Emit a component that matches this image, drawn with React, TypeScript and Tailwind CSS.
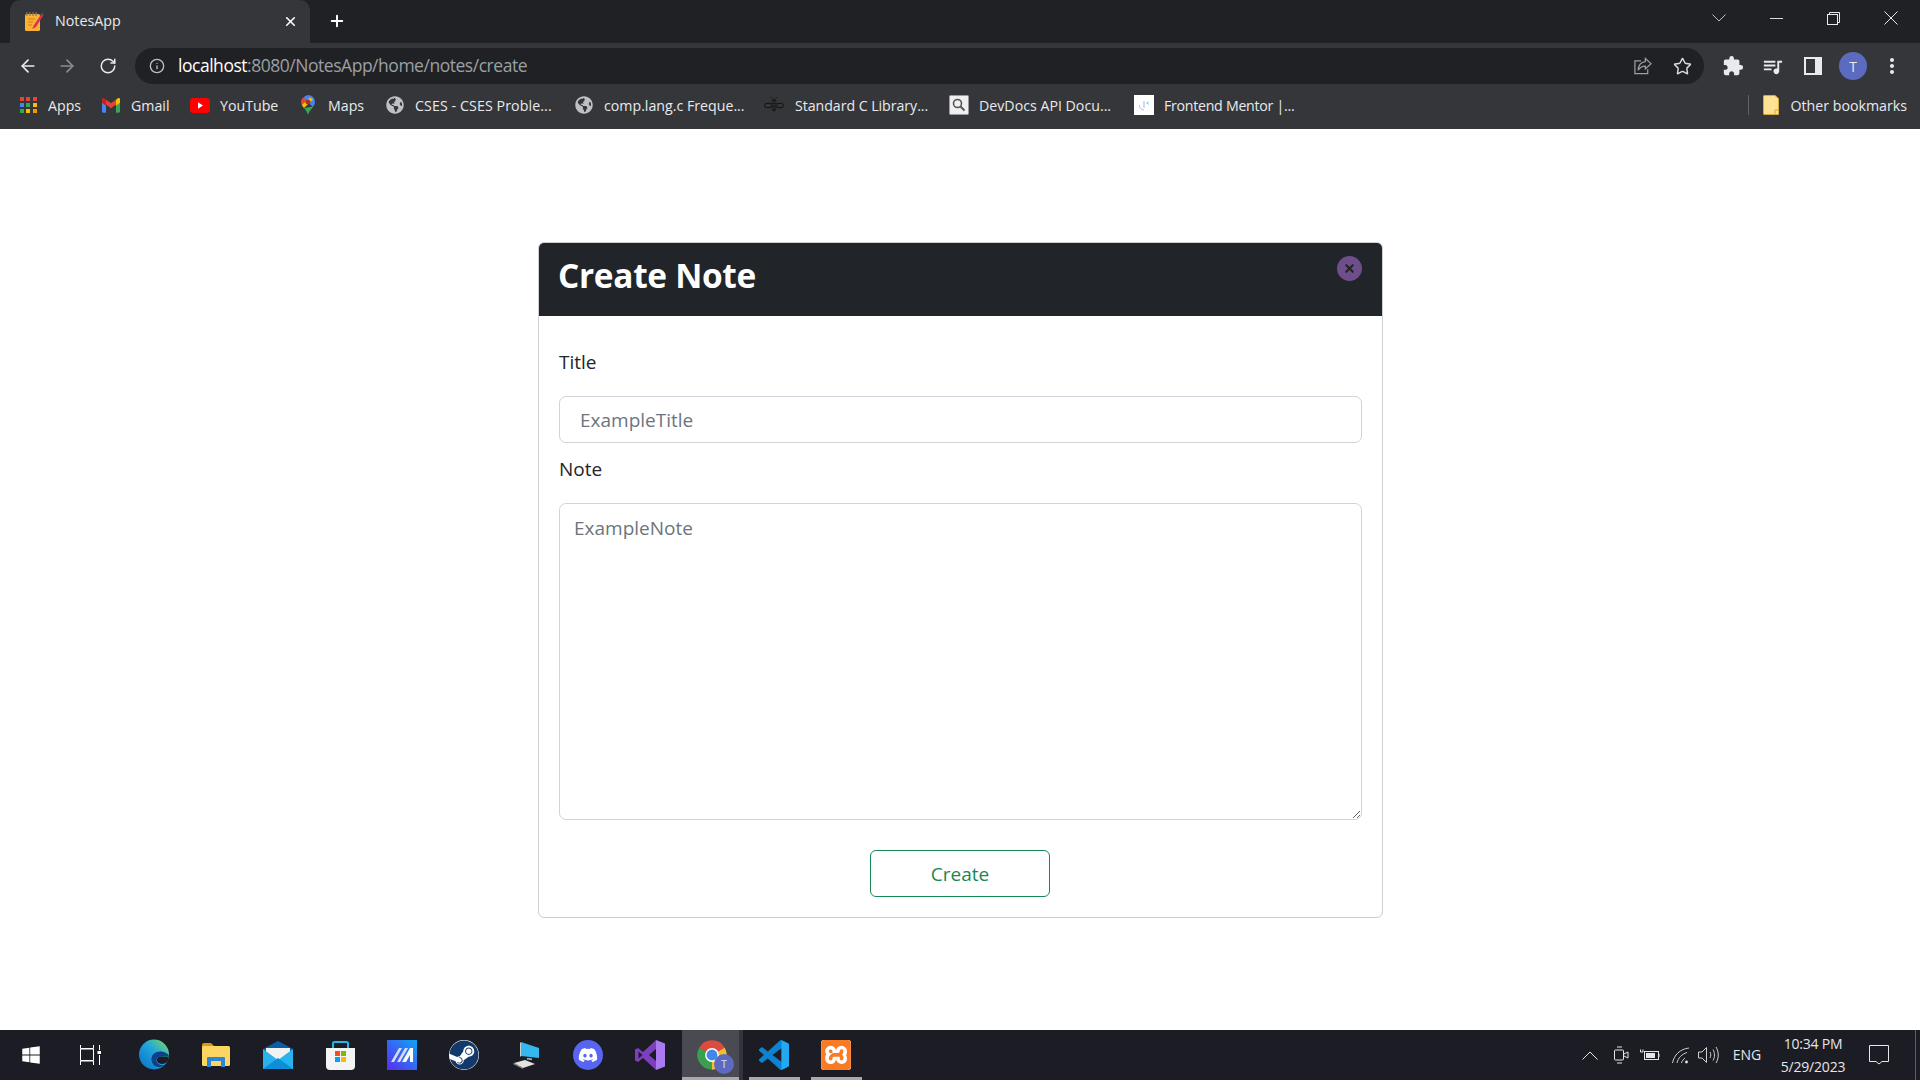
import { ArrowLeft, ArrowRight, RotateCw, Plus, X, Info, Star } from "lucide-react";
import { FaDiscord, FaGlobeAmericas, FaSteam, FaWindows } from "react-icons/fa";
import { MdExtension, MdMoreVert, MdQueueMusic } from "react-icons/md";
import { SiXampp } from "react-icons/si";
import { ReactNode } from "react";

function Favicon() {
    return <svg viewBox="0 0 20 20" className="w-5 h-5">
        <rect x="1" y="3" width="15" height="17" rx="1.5" fill="#f9b233" />
        <path d="M3 1v4M6 1v4M9 1v4M12 1v4" stroke="#777" strokeWidth="1.2" />
        <path d="M4 8h7M4 11h5M4 14h4" stroke="#e98a1d" strokeWidth="1.3" />
        <path d="M18 2 L10 14 L8 18 L12 16 L19.5 4 Z" fill="#e0304e" />
        <path d="M18 2 L19.5 4 L18.6 5.4 L16.8 3.8 Z" fill="#555" />
    </svg>
}

function AppsIcon() {
    const colors = ["#ea4335", "#ea4335", "#ea4335", "#4285f4", "#34a853", "#fbbc04", "#34a853", "#fbbc04", "#f29900"]
    return <div className="grid grid-cols-3 gap-[2px] w-[17px]">
        {colors.map((c, i) => <div key={i} className="h-[4px] w-[4px]" style={{ background: c }} />)}
    </div>
}

function GmailIcon() {
    return <svg viewBox="0 0 20 16" className="w-[18px] h-[15px]">
        <path d="M0 3 V14.5 A1.5 1.5 0 0 0 1.5 16 H4.5 V7 Z" fill="#4285f4" />
        <path d="M15.5 7 V16 H18.5 A1.5 1.5 0 0 0 20 14.5 V3 Z" fill="#34a853" />
        <path d="M4.5 7 L10 11 L15.5 7 V1.5 L10 5.6 L4.5 1.5 Z" fill="#ea4335" />
        <path d="M0 3 V5 L4.5 8.4 V1.5 L3 .4 A1.9 1.9 0 0 0 0 3 Z" fill="#c5221f" />
        <path d="M15.5 1.5 V8.4 L20 5 V3 A1.9 1.9 0 0 0 17 .4 Z" fill="#fbbc04" />
    </svg>
}

function YoutubeIcon() {
    return <svg viewBox="0 0 20 15" className="w-5 h-[15px]">
        <rect width="20" height="15" rx="3.5" fill="#f00" />
        <path d="M8 4.3 L13 7.5 L8 10.7 Z" fill="#fff" />
    </svg>
}

function MapsIcon() {
    return <svg viewBox="0 0 14 20" className="w-[14px] h-5">
        <path d="M7 0 A7 7 0 0 1 14 7 C14 9 13 10.5 12 12 L2 3 A7 7 0 0 1 7 0 Z" fill="#4285f4" />
        <path d="M2 2.4 A7 7 0 0 0 0 7 C0 8 .3 9 .8 9.8 L6 5 Z" fill="#ea4335" />
        <path d="M.8 9.8 L9 2.6 L12.2 4.6 L3 13 C2 12 1.3 11 .8 9.8 Z" fill="#fbbc04" />
        <path d="M3 13 L12.4 11.4 C10.5 14 8 16 7 20 C6.5 17.5 4.7 15 3 13 Z" fill="#34a853" />
        <circle cx="7" cy="7" r="2.5" fill="#a5352c" />
    </svg>
}

function Globe() {
    return <FaGlobeAmericas className="w-[18px] h-[18px] text-[#bdc1c6]" />
}

function BeeIcon() {
    return <svg viewBox="0 0 20 16" className="w-5 h-4" fill="#1b1b1b">
        <ellipse cx="10" cy="8" rx="3" ry="6.5" />
        <path d="M8 1 L6.5 0M12 1 L13.5 0" stroke="#1b1b1b" />
        <ellipse cx="4" cy="8.5" rx="3.6" ry="2.3" fill="none" stroke="#111" strokeWidth="1" />
        <ellipse cx="16" cy="8.5" rx="3.6" ry="2.3" fill="none" stroke="#111" strokeWidth="1" />
        <path d="M7 5h6M7 8h6M7 11h6" stroke="#35363a" strokeWidth="1" />
    </svg>
}

function DevDocsIcon() {
    return <svg viewBox="0 0 20 20" className="w-5 h-5">
        <rect x=".5" y=".5" width="19" height="19" rx="1" fill="#efefef" stroke="#9a9a9a" />
        <circle cx="8.5" cy="8.5" r="4" fill="none" stroke="#555" strokeWidth="1.6" />
        <path d="M11.5 11.5 L15.5 15.5" stroke="#555" strokeWidth="2" />
    </svg>
}

function FrontendMentorIcon() {
    return <svg viewBox="0 0 20 20" className="w-5 h-5">
        <rect width="20" height="20" fill="#fff" />
        <path d="M10 6 V13" stroke="#9db2e8" strokeWidth="1" />
        <path d="M5.5 10 A5 5 0 0 0 10 15" stroke="#b9b7e8" strokeWidth="1" fill="none" />
        <path d="M12.5 8 L15 7 M12.5 8 L15 9.5" stroke="#8fd0dc" strokeWidth="1" />
    </svg>
}

function FolderIcon() {
    return <svg viewBox="0 0 16 20" className="w-4 h-5">
        <path d="M.5 1 A.7 .7 0 0 1 1.2 .5 H12 L15.5 3.5 V19.5 H1.2 A.7 .7 0 0 1 .5 18.8 Z" fill="#fde293" stroke="#d6a93c" />
        <path d="M12 19 V15 H15.5" fill="none" stroke="#d6a93c" />
    </svg>
}

function ShareIcon() {
    return <svg viewBox="0 0 20 20" className="w-[19px] h-[19px]" fill="none" stroke="#9aa0a6" strokeWidth="1.3">
        <path d="M8.5 4 H2 V17.5 H15.5 V13" />
        <path d="M13 1.5 L19 7 L13 12.5 V9.5 C9.5 9.5 7 11 5.5 14 C5.5 9 8 5.5 13 4.8 Z" />
    </svg>
}

function SidePanelIcon() {
    return <svg viewBox="0 0 18 18" className="w-[18px] h-[18px]">
        <rect x="0" y="0" width="18" height="18" fill="#e8eaed" />
        <rect x="2" y="2" width="9" height="14" fill="#35363a" />
    </svg>
}

function WindowControls() {
    return <div className="flex items-center h-full ml-auto pb-[7px]">
        <svg viewBox="0 0 14 8" className="w-[14px] h-2" fill="none" stroke="#bdc1c6"><path d="M.5 .5 L7 7 L13.5 .5" /></svg>
        <svg viewBox="0 0 14 1" className="w-[13px] h-[1px] ml-[44px]"><rect width="14" height="1" fill="#e8eaed" /></svg>
        <svg viewBox="0 0 13 13" className="w-[13px] h-[13px] ml-[44px]" fill="none" stroke="#e8eaed"><path d="M2.5 2.5 V.5 H12.5 V10.5 H10.5" /><rect x=".5" y="2.5" width="10" height="10" /></svg>
        <svg viewBox="0 0 14 14" className="w-[14px] h-[14px] ml-[44px] mr-[22px]" fill="none" stroke="#e8eaed"><path d="M.5 .5 L13.5 13.5 M13.5 .5 L.5 13.5" /></svg>
    </div>
}

type Bookmark = { label: string, icon: ReactNode, slot: string, width: string, text?: string }

const bookmarks: Bookmark[] = [
    { label: "Apps", icon: <AppsIcon />, slot: "w-[28px]", width: "w-[82px]" },
    { label: "Gmail", icon: <GmailIcon />, slot: "w-[29px]", width: "w-[88px]" },
    { label: "YouTube", icon: <YoutubeIcon />, slot: "w-[30px]", width: "w-[111px]" },
    { label: "Maps", icon: <MapsIcon />, slot: "w-[27px]", width: "w-[85px]" },
    { label: "CSES - CSES Proble...", icon: <Globe />, slot: "w-[29px]", width: "w-[189px]", text: "tracking-[0.1px]" },
    { label: "comp.lang.c Freque...", icon: <Globe />, slot: "w-[29px]", width: "w-[189px]" },
    { label: "Standard C Library...", icon: <BeeIcon />, slot: "w-[31px]", width: "w-[185px]", text: "tracking-[-0.05px]" },
    { label: "DevDocs API Docu...", icon: <DevDocsIcon />, slot: "w-[30px]", width: "w-[185px]" },
    { label: "Frontend Mentor |...", icon: <FrontendMentorIcon />, slot: "w-[30px]", width: "w-[180px]", text: "tracking-[-0.28px]" },
]

function BrowserChrome() {
    return <header className="shrink-0 font-['Open_Sans',sans-serif] text-[#e8eaed]">
        <div className="h-[43px] bg-[#202124] flex items-end pl-[10px]">
            <div className="w-[300px] h-[43px] bg-[#35363a] rounded-t-[10px] flex items-center pl-[14px] pr-[12px] pb-[1px]">
                <Favicon />
                <span className="ml-[11px] text-[14.3px]">NotesApp</span>
                <X className="ml-auto w-[15px] h-[15px] text-white" strokeWidth={2.6} />
            </div>
            <div className="h-[43px] flex items-center ml-[18px] pb-[1px]">
                <Plus className="w-[18px] h-[18px] text-white" strokeWidth={2.6} />
            </div>
            <WindowControls />
        </div>
        <div className="h-[41px] bg-[#35363a] pt-[5px] flex items-start">
            <div className="w-[135px] h-[36px] flex items-center pl-[18px]">
                <ArrowLeft className="w-5 h-5 text-[#e8eaed]" strokeWidth={2} />
                <ArrowRight className="w-5 h-5 text-[#8a8c90] ml-[19px]" strokeWidth={2} />
                <RotateCw className="w-[18px] h-[18px] text-[#e8eaed] ml-[22px]" strokeWidth={2} />
            </div>
            <div className="w-[1569px] h-[36px] bg-[#202124] rounded-full flex items-center pl-[14px] pr-[12px]">
                <Info className="w-4 h-4 text-[#bdc1c6]" strokeWidth={2} />
                <span className="ml-[13px] pb-[2px] text-[17.5px] tracking-[-0.47px] text-white">localhost<span className="text-[#9aa0a6]">:8080/NotesApp/home/notes/create</span></span>
                <div className="ml-auto flex items-center gap-[21px]">
                    <ShareIcon />
                    <Star className="w-[19px] h-[19px] text-[#dadce0]" strokeWidth={1.8} />
                </div>
            </div>
            <div className="flex-1 h-[36px] flex items-center pl-[18px]">
                <MdExtension className="w-[22px] h-[22px] text-[#e8eaed]" />
                <MdQueueMusic className="w-[23px] h-[23px] text-[#e8eaed] ml-[17px]" />
                <div className="ml-[20px]"><SidePanelIcon /></div>
                <div className="ml-[17px] w-[28px] h-[28px] rounded-full bg-[#5c6bc0] flex items-center justify-center text-[14px] text-[#e8eaed]">T</div>
                <MdMoreVert className="w-[24px] h-[24px] text-[#e8eaed] ml-[13px]" />
            </div>
        </div>
        <div className="h-[45px] bg-[#35363a] flex items-center pl-[20px] pb-[2px] text-[14.2px] whitespace-nowrap">
            {bookmarks.map((b) => <div key={b.label} className={`flex items-center ${b.width}`}>
                <div className={`flex items-center ${b.slot}`}>{b.icon}</div>
                <span className={b.text}>{b.label}</span>
            </div>)}
            <div className="ml-auto flex items-center pr-[13px]">
                <div className="w-[1px] h-[20px] bg-[#5f6368] mr-[14px]" />
                <FolderIcon />
                <span className="ml-[12px]">Other bookmarks</span>
            </div>
        </div>
    </header>
}

function CreateNoteCard() {
    return <main className="flex-1 bg-white pt-[113px] font-['Open_Sans',sans-serif]">
        <div className="w-[845px] h-[676px] ml-[538px] border border-[#cfcfd2] rounded-[6px] overflow-hidden">
            <div className="h-[73px] bg-[#212529] flex pl-[19px] pr-[20px] relative">
                <h1 className="text-[33.4px] font-bold text-white leading-[65px] tracking-[-0.3px]">Create Note</h1>
                <button className="ml-auto mt-[13px] w-[25px] h-[25px] rounded-full bg-[#6f4e8c] flex items-center justify-center">
                    <X className="w-[13px] h-[13px] text-[#212529]" strokeWidth={4} />
                </button>
            </div>
            <form className="px-[20px] flex flex-col">
                <label className="mt-[31px] h-[30px] leading-[30px] text-[19px] text-[#212529]">Title</label>
                <input placeholder="ExampleTitle" className="mt-[19px] h-[47px] border border-[#ced4da] rounded-[7px] pl-[20px] pt-[1px] text-[19px] outline-none placeholder:text-[#6c757d]" />
                <label className="mt-[11px] h-[30px] leading-[30px] text-[19px] text-[#212529]">Note</label>
                <textarea placeholder="ExampleNote" className="mt-[19px] h-[317px] border border-[#ced4da] rounded-[7px] pl-[14px] pr-[15px] py-[9px] text-[19px] leading-[30px] outline-none placeholder:text-[#6c757d]" />
                <button type="button" className="mt-[30px] self-start ml-[311px] w-[180px] h-[47px] border border-[#198754] rounded-[6px] pt-[2px] text-[19px] text-[#198754]">Create</button>
            </form>
        </div>
    </main>
}

function EdgeIcon() {
    return <svg viewBox="0 0 32 32" className="w-[32px] h-[32px]">
        <defs>
            <linearGradient id="edgeA" x1="0" y1="1" x2="1" y2="0">
                <stop offset="0" stopColor="#0c6ec4" />
                <stop offset=".55" stopColor="#1fa5dd" />
                <stop offset="1" stopColor="#7fe05a" />
            </linearGradient>
        </defs>
        <circle cx="16" cy="15.5" r="15" fill="url(#edgeA)" />
        <path d="M31 17 C30 14 26 12.5 22 12.5 C16 12.5 13 17 13.5 21 C14 27 21 31 27 25.5 C23 27 18.5 25 18.5 21.5 C18.5 19 20 17.4 22 17.4 Z" fill="#0d3f8a" />
        <path d="M19 21 C19 18.8 20.5 17.4 22 17.4 L30.8 17.4 C30.8 19 30 21.5 29 23 C26 26 19 25.5 19 21 Z" fill="#1b1c24" />
    </svg>
}

function ExplorerIcon() {
    return <svg viewBox="0 0 28 24" className="w-[28px] h-[24px]">
        <path d="M0 2 A2 2 0 0 1 2 0 H9 L12 3 H12 V6 H0 Z" fill="#d99a0b" />
        <rect x="0" y="3" width="28" height="20" rx="1.5" fill="#fcd562" />
        <path d="M5 24 V15 A1 1 0 0 1 6 14 H22 A1 1 0 0 1 23 15 V24 H19 V18 H9 V24 Z" fill="#2b88d8" />
    </svg>
}

function MailIcon() {
    return <svg viewBox="0 0 30 28" className="w-[30px] h-[28px]">
        <path d="M0 8 L15 0 L30 8 V12 H0 Z" fill="#0a5ea8" />
        <path d="M3 7 H27 V18 H3 Z" fill="#f2f2f2" />
        <path d="M0 8 L15 19 L30 8 V28 H0 Z" fill="#28b3ee" />
        <path d="M0 28 L15 17 L30 28 Z" fill="#0e8ed8" />
    </svg>
}

function StoreIcon() {
    return <svg viewBox="0 0 29 29" className="w-[29px] h-[29px]">
        <path d="M7 7 V2.5 A1.5 1.5 0 0 1 8.5 1 H20.5 A1.5 1.5 0 0 1 22 2.5 V7" fill="none" stroke="#25b6e8" strokeWidth="2" />
        <path d="M0 7 H29 V25 A4 4 0 0 1 25 29 H4 A4 4 0 0 1 0 25 Z" fill="#f4f4f4" />
        <rect x="9" y="10" width="5" height="5" fill="#f25022" />
        <rect x="15" y="10" width="5" height="5" fill="#7fba00" />
        <rect x="9" y="16" width="5" height="5" fill="#00a4ef" />
        <rect x="15" y="16" width="5" height="5" fill="#ffb900" />
    </svg>
}

function MaIcon() {
    return <svg viewBox="0 0 30 30" className="w-[30px] h-[30px]">
        <defs>
            <linearGradient id="maA" x1="0" y1="1" x2="1" y2="0">
                <stop offset="0" stopColor="#5b2bf0" />
                <stop offset="1" stopColor="#0ea5f5" />
            </linearGradient>
        </defs>
        <rect width="30" height="30" fill="url(#maA)" />
        <path d="M4 22 L12 8 H15 L7 22 Z M10 22 L18 8 H21 L13 22 Z" fill="#d6dcff" />
        <path d="M15 22 L23 8 H26 V22 H23 V15 L19 22 Z" fill="#fff" />
    </svg>
}

function SteamIcon() {
    return <div className="w-[30px] h-[30px] rounded-full bg-white relative overflow-hidden">
        <FaSteam className="w-[30px] h-[30px] text-[#12396a]" />
    </div>
}

function PcIcon() {
    return <svg viewBox="0 0 30 28" className="w-[30px] h-[28px]">
        <path d="M10 1 L28 7 V17 L10 15 Z" fill="#35b8f0" />
        <path d="M10 1 L9 2 V16 L10 15 Z" fill="#c8d0d8" />
        <path d="M16 17 L21 17.6 V19 L16 18.6 Z" fill="#b8bec4" />
        <path d="M3 22 L14 19 L24 23 L12 27 Z" fill="#e2e2e2" />
        <path d="M3 22 L12 27 V28 L2 23 Z" fill="#8f8f8f" />
    </svg>
}

function VisualStudioIcon() {
    return <svg viewBox="0 0 30 30" className="w-[30px] h-[30px]">
        <path fillRule="evenodd" d="M21 0 L8 12 L3 8 L0 9.5 V20.5 L3 22 L8 18 L21 30 V21 L14 15 L21 9 Z M3.5 11.5 V18.5 L7.5 15 Z" fill="#7c3fbe" />
        <path fillRule="evenodd" d="M21 0 L30 3.5 V26.5 L21 30 Z" fill="#ab7aee" />
    </svg>
}

function ChromeIcon() {
    return <div className="relative w-[32px] h-[32px]">
        <svg viewBox="0 0 24 24" className="w-[32px] h-[32px]">
            <path d="M12 12 L2.47 6.5 A11 11 0 0 1 21.53 6.5 Z" fill="#dd4b3e" />
            <path d="M12 12 L21.53 6.5 A11 11 0 0 1 12 23 Z" fill="#f5c02f" />
            <path d="M12 12 L12 23 A11 11 0 0 1 2.47 6.5 Z" fill="#3c9f50" />
            <circle cx="12" cy="12" r="5.2" fill="#fff" />
            <circle cx="12" cy="12" r="4.1" fill="#3f88e8" />
        </svg>
        <div className="absolute -right-[6px] -bottom-[3px] w-[20px] h-[20px] rounded-full bg-[#5c6bc0] flex items-center justify-center text-[11px] text-[#d8dcf5] font-['Open_Sans',sans-serif]">T</div>
    </div>
}

function VsCodeIcon() {
    return <svg viewBox="0 0 24 24" className="w-[30px] h-[30px]">
        <path d="M23.15 2.587L18.21.21a1.494 1.494 0 0 0-1.705.29l-9.46 8.63-4.12-3.128a.999.999 0 0 0-1.276.057L.327 7.261A1 1 0 0 0 .326 8.74L3.899 12 .326 15.26a1 1 0 0 0 .001 1.479L1.65 17.94a.999.999 0 0 0 1.276.057l4.12-3.128 9.46 8.63a1.492 1.492 0 0 0 1.704.29l4.942-2.377A1.5 1.5 0 0 0 24 20.06V3.939a1.5 1.5 0 0 0-.85-1.352zm-5.146 14.861L10.826 12l7.178-5.448v10.896z" fill="#0f82cf" />
        <path d="M18 .1 L23.15 2.587 A1.5 1.5 0 0 1 24 3.94 V20.06 A1.5 1.5 0 0 1 23.15 21.41 L18 23.9 Z" fill="#22a9f1" />
    </svg>
}

function XamppIcon() {
    return <div className="w-[30px] h-[30px] bg-white rounded-[3px] overflow-hidden">
        <SiXampp className="w-[30px] h-[30px] text-[#fb7a24]" />
    </div>
}

function TaskviewIcon() {
    return <svg viewBox="0 0 21 20" className="w-[21px] h-5" fill="none" stroke="#fff" strokeWidth="1">
        <path d="M.5 0 V3.5 H13.5 V0 M.5 4 H13.5 V15.5 H.5 Z M.5 20 V16 H13.5 V20 M19.5 0 V5 M19.5 10 V20" />
        <rect x="17.5" y="6" width="4" height="3" fill="#fff" stroke="none" />
    </svg>
}

function Tray() {
    const line = "none"
    return <div className="ml-auto flex items-center h-full text-white font-['Open_Sans',sans-serif]">
        <svg viewBox="0 0 16 9" className="w-4 h-[9px]" fill={line} stroke="#e6e6e6"><path d="M.5 8.5 L8 1 L15.5 8.5" /></svg>
        <svg viewBox="0 0 15 20" className="w-[15px] h-5 ml-[16px]" fill={line} stroke="#e6e6e6"><rect x=".5" y="5" width="9" height="10" rx="1" /><path d="M10 9 L14 7 V13 L10 11 M3 2 H8 M3 18 H8" /></svg>
        <svg viewBox="0 0 20 12" className="w-5 h-3 ml-[11px]" fill={line} stroke="#e6e6e6"><rect x="4.5" y="2.5" width="14" height="8" /><rect x="6" y="4" width="9" height="5" fill="#e6e6e6" stroke="none" /><path d="M19 5 V8 M.5 .5 V3 H3 V.5" /></svg>
        <svg viewBox="0 0 18 17" className="w-[18px] h-[17px] ml-[12px]" fill={line} stroke="#cfcfcf"><path d="M.5 16 C2 8 8 2 17 1 M5 16 C6 11 10 7 15 5.5 M9.5 16 C10 14 11.5 12 13 11" /><circle cx="14.5" cy="15" r="1.4" fill="#e6e6e6" stroke="none" /></svg>
        <svg viewBox="0 0 21 18" className="w-[21px] h-[18px] ml-[8px]" fill={line} stroke="#cfcfcf"><path d="M.5 6 H4 L8.5 1.5 V16.5 L4 12 H.5 Z M12 6 C13 8 13 10 12 12 M15 3.5 C17 7 17 11 15 14.5 M18 1 C21 6 21 12 18 17" /></svg>
        <span className="ml-[10px] w-[36px] text-[14px] leading-none text-center text-[#e6e6e6]">ENG</span>
        <div className="ml-[11px] w-[74px] flex flex-col items-center text-[14px] leading-[23px] text-[#e6e6e6] tracking-[-0.2px]">
            <span>10:34 PM</span>
            <span>5/29/2023</span>
        </div>
        <svg viewBox="0 0 20 20" className="w-5 h-5 ml-[19px]" fill={line} stroke="#e6e6e6"><path d="M.5 .5 H19.5 V16.5 H13 L10 19 L7 16.5 H.5 Z" /></svg>
        <div className="ml-[26px] w-[1px] h-full bg-[#5d5e66]" />
        <div className="w-[4px]" />
    </div>
}

type TaskItem = { key: string, icon: ReactNode, underline?: boolean, active?: boolean }

const taskItems: TaskItem[] = [
    { key: "edge", icon: <EdgeIcon /> },
    { key: "explorer", icon: <ExplorerIcon /> },
    { key: "mail", icon: <MailIcon /> },
    { key: "store", icon: <StoreIcon /> },
    { key: "ma", icon: <MaIcon /> },
    { key: "steam", icon: <SteamIcon /> },
    { key: "pc", icon: <PcIcon /> },
    { key: "discord", icon: <div className="w-[30px] h-[30px] rounded-full bg-[#5865f2] flex items-center justify-center"><FaDiscord className="w-[20px] h-[20px] text-white" /></div> },
    { key: "vs", icon: <VisualStudioIcon /> },
    { key: "chrome", icon: <ChromeIcon />, active: true },
    { key: "vscode", icon: <VsCodeIcon />, underline: true },
    { key: "xampp", icon: <XamppIcon />, underline: true },
]

function Taskbar() {
    return <footer className="shrink-0 h-[50px] bg-[#1b1c24] flex items-center">
        <div className="w-[61px] h-full flex items-center justify-center">
            <FaWindows className="w-5 h-5 text-white" />
        </div>
        <div className="w-[62px] h-full flex items-center justify-center -translate-x-[2px]">
            <TaskviewIcon />
        </div>
        {taskItems.map((t) => <div key={t.key} className="w-[62px] h-full flex items-center justify-center relative">
            {t.active && <div className="absolute inset-y-0 left-[1px] right-[4px] bg-[#4a4b52]" />}
            {t.active && <div className="absolute inset-y-0 right-0 w-[4px] bg-[#34353c]" />}
            {t.active && <div className="absolute bottom-0 left-[1px] right-[4px] h-[3px] bg-[#a9a9ab]" />}
            <div className="relative">{t.icon}</div>
            {t.underline && <div className="absolute bottom-0 left-[6px] right-[5px] h-[3px] bg-[#a9a9ab]" />}
        </div>)}
        <Tray />
    </footer>
}

export default function App() {
    return <div className="w-[1920px] h-[1080px] flex flex-col overflow-hidden">
        <BrowserChrome />
        <CreateNoteCard />
        <Taskbar />
    </div>
}
